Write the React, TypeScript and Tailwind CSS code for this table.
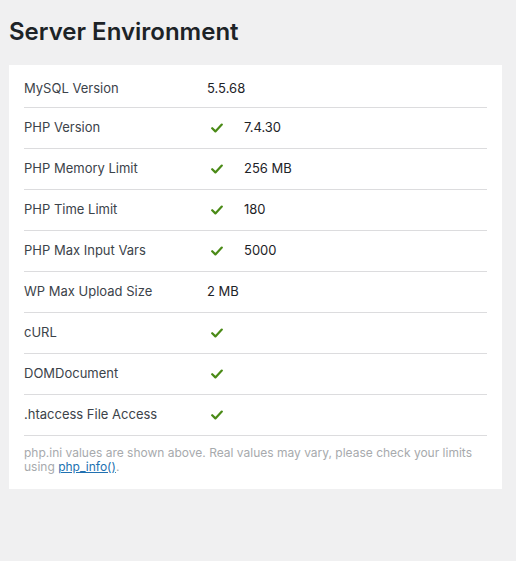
const rows: Array<{ label: string; ok?: boolean; value?: string }> = [
  { label: "MySQL Version", value: "5.5.68" },
  { label: "PHP Version", ok: true, value: "7.4.30" },
  { label: "PHP Memory Limit", ok: true, value: "256 MB" },
  { label: "PHP Time Limit", ok: true, value: "180" },
  { label: "PHP Max Input Vars", ok: true, value: "5000" },
  { label: "WP Max Upload Size", value: "2 MB" },
  { label: "cURL", ok: true },
  { label: "DOMDocument", ok: true },
  { label: ".htaccess File Access", ok: true },
]

function Check() {
  return (
    <svg width="12" height="10" viewBox="0 0 12 10" className="shrink-0">
      <path d="M1.2 5.2 L4.4 8.4 L10.8 1.6" fill="none" stroke="#4a8a16" strokeWidth="2.2" strokeLinecap="round" strokeLinejoin="round" />
    </svg>
  )
}

export default function App() {
  return (
    <main className="min-h-[561px] bg-[#f0f0f1] px-[9px] pt-[16px] font-['Inter',sans-serif]">
      <h1 className="text-[24px] leading-[31px] font-semibold text-[#1d2327]">Server Environment</h1>

      <div className="mt-[18px] w-[493px] bg-white px-[15px] pb-[16px]">
        {rows.map((row, i) => (
          <div
            key={row.label}
            className={
              i === 0
                ? "flex h-[43px] items-center border-b border-[#dcdcde] pt-[5px] text-[13px] text-[#1d2327]"
                : "flex h-[41px] items-center border-b border-[#dcdcde] text-[13px] text-[#1d2327]"
            }
          >
            <span className="w-[183px] text-[#3c434a]">{row.label}</span>
            {row.ok && (
              <span className="flex w-[37px] pl-[4px]">
                <Check />
              </span>
            )}
            {row.value && <span>{row.value}</span>}
          </div>
        ))}
        <p className="mt-[10px] text-[12px] leading-[13.5px] text-[#a7aaad]">
          php.ini values are shown above. Real values may vary, please check your limits using{" "}
          <a href="#" className="text-[#2271b1] underline">php_info()</a>.
        </p>
      </div>
    </main>
  )
}
